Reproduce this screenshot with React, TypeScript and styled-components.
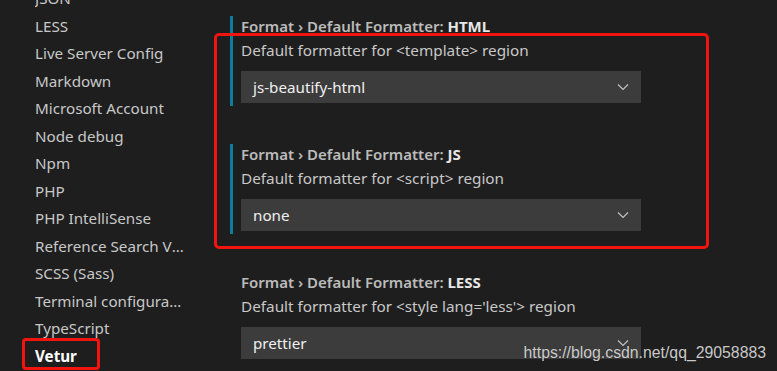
import React from 'react';
import styled, { createGlobalStyle } from 'styled-components';

const GlobalStyle = createGlobalStyle`
  html, body {
    margin: 0;
    padding: 0;
    background: #1e1e1e;
  }
  body {
    font-family: 'Noto Sans', 'Open Sans', sans-serif;
  }
`;

const Page = styled.div`
  position: relative;
  display: flex;
  width: 777px;
  height: 371px;
  overflow: hidden;
  background: #1e1e1e;
`;

const SideBar = styled.div`
  box-sizing: border-box;
  width: 230px;
  flex-shrink: 0;
  padding-left: 35px;
  padding-right: 44px;
`;

const NavList = styled.ul`
  list-style: none;
  margin: -15px 0 0;
  padding: 0;
`;

const NavItem = styled.li<{ active?: boolean }>`
  position: relative;
  height: 27.5px;
  line-height: 27.5px;
  font-size: 15.2px;
  color: ${(p) => (p.active ? '#ffffff' : '#c8c8c8')};
  font-weight: ${(p) => (p.active ? 700 : 400)};
  white-space: nowrap;
  text-overflow: ellipsis;
  overflow: ${(p) => (p.active ? 'visible' : 'hidden')};
  &::after {
    content: '';
    display: ${(p) => (p.active ? 'block' : 'none')};
    position: absolute;
    left: -13px;
    top: -5px;
    width: 72px;
    height: 26px;
    border: 3px solid #f2150f;
    border-radius: 4px;
  }
`;

const Main = styled.div`
  position: relative;
  flex: 1;
  padding-top: 16px;
`;

const Setting = styled.div<{ modified?: boolean }>`
  box-sizing: border-box;
  width: 411px;
  padding: 0 0 3px 8px;
  margin-bottom: 38px;
  border-left: 3px solid ${(p) => (p.modified ? '#0c7d9d' : 'transparent')};
`;

const Title = styled.div`
  height: 20px;
  line-height: 20px;
  font-size: 15px;
  font-weight: 600;
  color: #bbbbbb;
  white-space: nowrap;
  b {
    color: #e7e7e7;
    font-weight: 700;
  }
`;

const Description = styled.div`
  margin-top: 4px;
  height: 20px;
  line-height: 20px;
  font-size: 15.3px;
  color: #c8c8c8;
  white-space: nowrap;
`;

const Select = styled.div`
  box-sizing: border-box;
  margin-top: 11px;
  width: 400px;
  height: 32px;
  padding: 0 12px;
  display: flex;
  align-items: center;
  justify-content: space-between;
  background: #3c3c3c;
  color: #f0f0f0;
  font-size: 15.2px;
`;

const Highlight = styled.div`
  position: absolute;
  left: -16px;
  top: 33px;
  width: 489px;
  height: 210px;
  border: 3.5px solid #f2150f;
  border-radius: 5px;
  pointer-events: none;
`;

const Watermark = styled.div`
  position: absolute;
  right: 11px;
  bottom: 9px;
  font-family: 'Liberation Sans', Arial, sans-serif;
  font-size: 15.8px;
  color: rgba(235, 235, 235, 0.85);
  text-shadow: 0 0 1px rgba(0, 0, 0, 0.4);
`;

const Chevron = () => (
  <svg width="12" height="8" viewBox="0 0 12 8">
    <path d="M1 1.5 L6 6.5 L11 1.5" fill="none" stroke="#c5c5c5" strokeWidth="1.1" />
  </svg>
);

const navItems = [
  'JSON',
  'LESS',
  'Live Server Config',
  'Markdown',
  'Microsoft Account',
  'Node debug',
  'Npm',
  'PHP',
  'PHP IntelliSense',
  'Reference Search View',
  'SCSS (Sass)',
  'Terminal configuration',
  'TypeScript',
];

const settings = [
  { lang: 'HTML', desc: 'Default formatter for <template> region', value: 'js-beautify-html', modified: true },
  { lang: 'JS', desc: 'Default formatter for <script> region', value: 'none', modified: true },
  { lang: 'LESS', desc: "Default formatter for <style lang='less'> region", value: 'prettier', modified: false },
];

export default function App() {
  return (
    <Page>
      <GlobalStyle />
      <SideBar>
        <NavList>
          {navItems.map((item) => (
            <NavItem key={item}>{item}</NavItem>
          ))}
          <NavItem active>Vetur</NavItem>
        </NavList>
      </SideBar>
      <Main>
        {settings.map((s) => (
          <Setting key={s.lang} modified={s.modified}>
            <Title>
              Format › Default Formatter: <b>{s.lang}</b>
            </Title>
            <Description>{s.desc}</Description>
            <Select>
              <span>{s.value}</span>
              <Chevron />
            </Select>
          </Setting>
        ))}
        <Highlight />
      </Main>
      <Watermark>https://blog.csdn.net/qq_29058883</Watermark>
    </Page>
  );
}
